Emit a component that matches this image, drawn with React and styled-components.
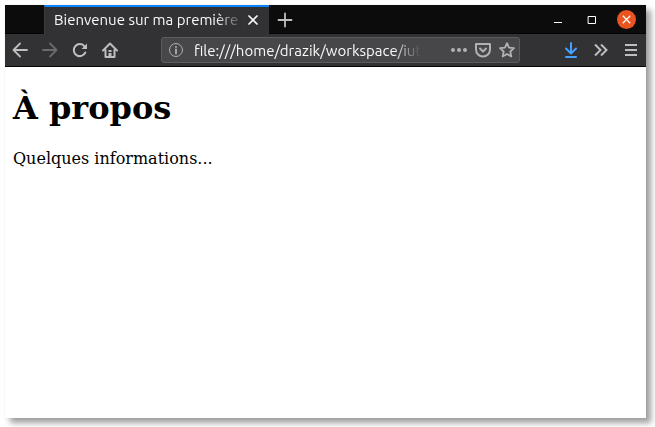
import styled, { createGlobalStyle } from "styled-components"


const GlobalStyle = createGlobalStyle`
    *, *::before, *::after {
        box-sizing: border-box;
    }
    body {
        margin: 0;
        background-color: #ffffff;
    }
    button, input {
        font: inherit;
        color: inherit;
        margin: 0;
        padding: 0;
        border: none;
        background: none;
    }
`

const Desktop = styled.div`
    display: flex;
    min-height: 100vh;
    padding: 5px 9px 9px 5px;
`
const Window = styled.div`
    flex: 1;
    min-width: 0;
    display: flex;
    flex-direction: column;
    background-color: #ffffff;
    box-shadow: 5px 5px 6px rgba(0, 0, 0, 0.38), 0 0 1px rgba(0, 0, 0, 0.1);
    font-family: Ubuntu, "Noto Sans", sans-serif;
    font-size: 15px;
`

// Title bar
const TitleBar = styled.header`
    display: flex;
    height: 29px;
    padding-left: 39px;
    background-color: #0c0c0d;
    box-shadow: inset 0 -1px 0 #040406;
    color: #f9f9fa;
`
const Tab = styled.div`
    flex: 0 1 225px;
    min-width: 0;
    display: flex;
    align-items: center;
    padding: 0 7px 2px 9px;
    background-color: #323234;
    border-top: 2px solid #0a84ff;
    border-left: 1px solid #3c3c3e;
`
const TabTitle = styled.span`
    flex: 1;
    min-width: 0;
    overflow: hidden;
    white-space: nowrap;
    line-height: 20px;
    mask-image: linear-gradient(to left, transparent, black 28px);
`
const IconButton = styled.button`
    flex: none;
    display: flex;
    align-items: center;
    justify-content: center;
    width: ${props => props.$width || 30}px;
    height: 100%;
    color: ${props => props.$color || "#bebebf"};
    svg {
        display: block;
    }
`
const WindowControls = styled.div`
    display: flex;
    margin-left: auto;
    padding-right: 3px;
`
const CloseCircle = styled.span`
    display: flex;
    align-items: center;
    justify-content: center;
    width: 19px;
    height: 19px;
    border-radius: 50%;
    background-color: #e95420;
`

// Toolbar
const Toolbar = styled.nav`
    display: flex;
    align-items: center;
    height: 33px;
    background-color: #323234;
    border-bottom: 1px solid #050507;
`
const UrlBar = styled.div`
    flex: 1;
    min-width: 0;
    display: flex;
    align-items: center;
    height: 26px;
    margin: 0 36px;
    background-color: #474749;
    border: 1px solid #5c5c5e;
    border-radius: 3px;
`
const UrlInput = styled.input`
    flex: 1;
    min-width: 0;
    height: 20px;
    margin: 0 26px 0 4px;
    color: #f9f9fa;
    outline: none;
    mask-image: linear-gradient(to left, transparent, black 28px);
`

// Page
const Page = styled.main`
    flex: 1;
    padding: 22px 8px;
    color: #000000;
    font-family: "DejaVu Serif", serif;
    font-size: 16px;
    line-height: 19px;
`
const Heading = styled.h1`
    margin: 0;
    font-size: 32px;
    line-height: 38px;
    font-weight: 700;
`
const Paragraph = styled.p`
    margin: 22px 0 0;
`


const Icon = ({ size = 16, children, ...rest }) => (
    <svg
        width={size}
        height={size}
        viewBox="0 0 16 16"
        fill="none"
        stroke="currentColor"
        strokeWidth="2"
        strokeLinecap="round"
        strokeLinejoin="round"
        aria-hidden="true"
        {...rest}>
        {children}
    </svg>
)

const App = () => {
  return (
    <>
        <GlobalStyle />
        <Desktop>
            <Window>
                <TitleBar>
                    <Tab>
                        <TabTitle>Bienvenue sur ma première page</TabTitle>
                        <IconButton $width={18} $color="#f9f9fa" aria-label="Fermer l'onglet">
                            <Icon strokeWidth="1.7"><path d="M4 4l8 8M12 4l-8 8" /></Icon>
                        </IconButton>
                    </Tab>
                    <IconButton $width={32} aria-label="Nouvel onglet">
                        <Icon strokeWidth="1.8"><path d="M8 1.500v13M1.500 8h13" /></Icon>
                    </IconButton>
                    <WindowControls>
                        <IconButton $width={34} $color="#ffffff" aria-label="Réduire">
                            <Icon strokeWidth="1" strokeLinecap="butt"><path d="M4 10.500h8" /></Icon>
                        </IconButton>
                        <IconButton $width={34} $color="#ffffff" aria-label="Agrandir">
                            <Icon strokeWidth="1" strokeLinejoin="miter"><path d="M4.500 4.500h7v7h-7z" /></Icon>
                        </IconButton>
                        <IconButton $width={34} $color="#ffffff" aria-label="Fermer">
                            <CloseCircle>
                                <Icon size={15} strokeWidth="1.4" strokeLinecap="butt"><path d="M4 4l8 8M12 4l-8 8" /></Icon>
                            </CloseCircle>
                        </IconButton>
                    </WindowControls>
                </TitleBar>

                <Toolbar>
                    <IconButton aria-label="Précédent">
                        <Icon strokeWidth="1.8"><path d="M15 8H1.500M8 1.500L1.500 8l6.500 6.500" /></Icon>
                    </IconButton>
                    <IconButton $color="#6b6b6d" aria-label="Suivant">
                        <Icon strokeWidth="1.8"><path d="M1 8h13.500M8 1.500l6.500 6.500L8 14.500" /></Icon>
                    </IconButton>
                    <IconButton aria-label="Actualiser">
                        <Icon>
                            <path d="M12.600 4.500A6 6 0 1 0 13.300 10.500" />
                            <path d="M15 1.500v5.500H9.500z" fill="currentColor" stroke="none" />
                        </Icon>
                    </IconButton>
                    <IconButton aria-label="Accueil">
                        <Icon>
                            <path d="M1 8.500l7-7 7 7M3.500 8v7h9V8" />
                            <path d="M6.500 8h3v2h-3zM6.500 11h3v4h-3z" fill="currentColor" stroke="none" />
                        </Icon>
                    </IconButton>

                    <UrlBar>
                        <IconButton $width={28} $color="#b1b1b3" aria-label="Informations sur le site">
                            <Icon strokeWidth="1">
                                <circle cx="8" cy="8" r="6.500" />
                                <path d="M8 7.500v4M8 4.800v.2" strokeWidth="1.800" />
                            </Icon>
                        </IconButton>
                        <UrlInput
                            type="text"
                            aria-label="Adresse"
                            defaultValue="file:///home/drazik/workspace/iut/index.html" />
                        <IconButton $width={24} $color="#b1b1b3" aria-label="Actions de la page">
                            <Icon fill="currentColor" stroke="none">
                                <circle cx="2" cy="8" r="2" />
                                <circle cx="8" cy="8" r="2" />
                                <circle cx="14" cy="8" r="2" />
                            </Icon>
                        </IconButton>
                        <IconButton $width={24} $color="#b1b1b3" aria-label="Enregistrer dans Pocket">
                            <Icon>
                                <path d="M1 2h14v5.500a7 7 0 0 1-14 0z" />
                                <path d="M5 6.500l3 3 3-3" />
                            </Icon>
                        </IconButton>
                        <IconButton $width={24} $color="#b1b1b3" aria-label="Marquer cette page">
                            <Icon strokeWidth="1.800">
                                <path d="M8 1.200l2 4.500 5 .5-3.700 3.300 1 5L8 12l-4.300 2.500 1-5L1 6.200l5-.5z" />
                            </Icon>
                        </IconButton>
                    </UrlBar>

                    <IconButton $color="#45a1ff" aria-label="Téléchargements">
                        <Icon><path d="M8 1v10M3 6.500L8 11.500l5-5M3 15h10" /></Icon>
                    </IconButton>
                    <IconButton aria-label="Plus d'outils">
                        <Icon strokeLinecap="butt" strokeLinejoin="miter"><path d="M2 2.500L7.500 8 2 13.500M8 2.500L13.500 8 8 13.500" /></Icon>
                    </IconButton>
                    <IconButton aria-label="Menu">
                        <Icon strokeLinecap="butt"><path d="M2 3h12M2 8h12M2 13h12" /></Icon>
                    </IconButton>
                </Toolbar>

                <Page>
                    <Heading>À propos</Heading>
                    <Paragraph>Quelques informations...</Paragraph>
                </Page>
            </Window>
        </Desktop>
    </>
  )
}

export default App
